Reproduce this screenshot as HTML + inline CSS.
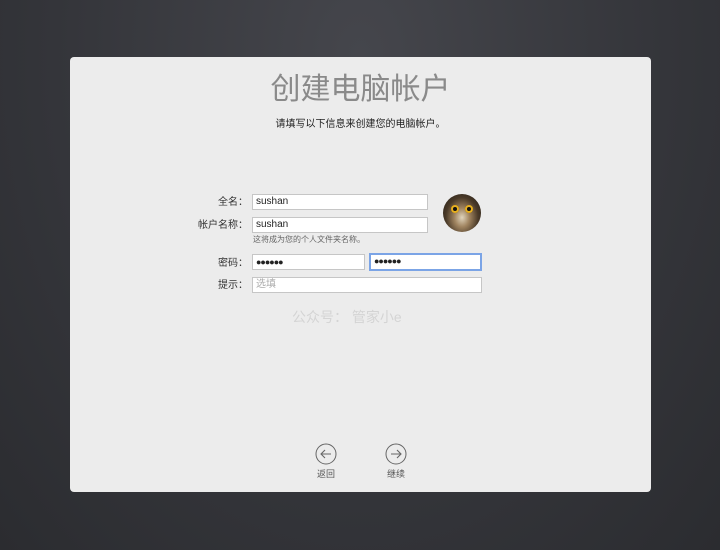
<!DOCTYPE html>
<html><head><meta charset="utf-8"><style>
body{margin:0;width:720px;height:550px;overflow:hidden;background:radial-gradient(ellipse at 50% 10%,#45464c 0%,#34353a 60%,#2b2c30 100%);font-family:"Liberation Sans","Noto Sans CJK SC",sans-serif;position:relative}
.panel{position:absolute;left:70px;top:57px;width:581px;height:435px;background:#ececec;border-radius:4px}
.a{position:absolute}
.t{left:0;width:581px;text-align:center}
.lbl{font-size:10px;color:#333;text-align:right;width:60px;line-height:14px}
.in{position:absolute;background:#fff;border:1px solid #c6c6c6;box-sizing:border-box;font-size:10px;color:#222;padding-left:3px;line-height:14px}
</style></head><body>
<div class="panel">
<div class="a t" style="top:13px;font-size:30px;color:#8a8a8a;line-height:40px;">创建电脑帐户</div>
<div class="a t" style="top:58px;font-size:10px;color:#222;">请填写以下信息来创建您的电脑帐户。</div>
<div class="a lbl" style="left:118px;top:139px">全名：</div>
<div class="a lbl" style="left:118px;top:162px">帐户名称：</div>
<div class="a lbl" style="left:118px;top:200px">密码：</div>
<div class="a lbl" style="left:118px;top:222px">提示：</div>
<div class="in" style="left:182px;top:137px;width:176px;height:16px">sushan</div>
<div class="in" style="left:182px;top:160px;width:176px;height:16px">sushan</div>
<div class="a" style="left:183px;top:177px;font-size:8px;color:#666">这将成为您的个人文件夹名称。</div>
<div class="in" style="left:182px;top:197px;width:113px;height:16px;font-size:9px;letter-spacing:-1px">●●●●●●</div>
<div class="in" style="left:299px;top:196px;width:113px;height:18px;border:2px solid #7ba4e6;font-size:9px;letter-spacing:-1px;line-height:13px">●●●●●●</div>
<div class="in" style="left:182px;top:220px;width:230px;height:16px;color:#aaa">选填</div>
<div class="a" style="left:373px;top:137px;width:38px;height:38px;border-radius:50%;background:radial-gradient(ellipse at 50% 62%,#e0d4bc 0%,#a08460 28%,#4a3a28 60%,#1a1612 100%)">
<div class="a" style="left:8px;top:11px;width:8px;height:8px;border-radius:50%;background:#e8b020;box-shadow:inset 0 0 0 2px #e8b020, inset 0 0 0 5px #111"></div>
<div class="a" style="left:22px;top:11px;width:8px;height:8px;border-radius:50%;background:#e8b020;box-shadow:inset 0 0 0 2px #e8b020, inset 0 0 0 5px #111"></div>
</div>
<div class="a" style="left:222px;top:250px;font-size:14px;color:#d4d4d4">公众号： 管家小e</div>
<svg class="a" style="left:245px;top:386px" width="22" height="22" viewBox="0 0 22 22"><circle cx="11" cy="11" r="10" fill="none" stroke="#666" stroke-width="1"/><path d="M16 11H6M10 7l-4 4 4 4" fill="none" stroke="#666" stroke-width="1.1"/></svg>
<svg class="a" style="left:315px;top:386px" width="22" height="22" viewBox="0 0 22 22"><circle cx="11" cy="11" r="10" fill="none" stroke="#666" stroke-width="1"/><path d="M6 11h10M12 7l4 4-4 4" fill="none" stroke="#666" stroke-width="1.1"/></svg>
<div class="a" style="left:236px;top:410px;width:40px;text-align:center;font-size:9px;color:#555">返回</div>
<div class="a" style="left:306px;top:410px;width:40px;text-align:center;font-size:9px;color:#555">继续</div>
</div>
</body></html>
